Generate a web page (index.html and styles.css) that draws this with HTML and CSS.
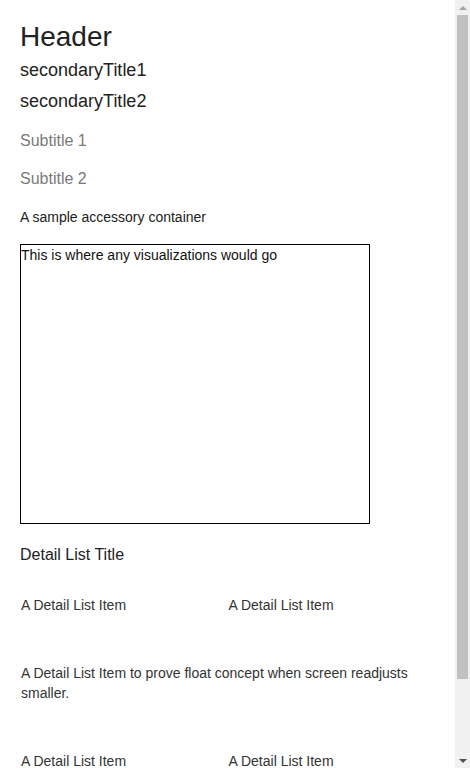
FILE: index.html
```html
<!DOCTYPE html>
<html lang="en">
<head>
<meta charset="utf-8">
<title>Detail View</title>
<link rel="stylesheet" href="styles.css">
</head>
<body>
<main class="page">
  <h1 class="header">Header</h1>
  <h2 class="secondary secondary-first">secondaryTitle1</h2>
  <h2 class="secondary secondary-next">secondaryTitle2</h2>
  <h3 class="subtitle subtitle-first">Subtitle 1</h3>
  <h3 class="subtitle subtitle-next">Subtitle 2</h3>
  <div class="accessory">A sample accessory container</div>
  <div class="viz">This is where any visualizations would go</div>
  <section class="detail-list">
    <h4 class="detail-title">Detail List Title</h4>
    <div class="items">
      <div class="item">A Detail List Item</div>
      <div class="item">A Detail List Item</div>
      <div class="item item-wide">A Detail List Item to prove float concept when screen readjusts smaller.</div>
      <div class="item">A Detail List Item</div>
      <div class="item">A Detail List Item</div>
    </div>
  </section>
</main>
<div class="scrollbar" aria-hidden="true">
  <div class="sb-button"><span class="sb-arrow-up"></span></div>
  <div class="sb-track"><div class="sb-thumb"></div></div>
  <div class="sb-button"><span class="sb-arrow-down"></span></div>
</div>
</body>
</html>
```

FILE: styles.css
```css
html, body {
  margin: 0;
  padding: 0;
  background: #ffffff;
}

body {
  font-family: "Liberation Sans", Arial, sans-serif;
  color: #222222;
}

.page {
  width: 455px;
  box-sizing: border-box;
  padding: 21px 20px 57px 20px;
}

.header {
  margin: 0;
  font-size: 28px;
  line-height: 32px;
  font-weight: normal;
  color: #222222;
}

.secondary {
  margin: 0;
  font-size: 18px;
  line-height: 22px;
  font-weight: normal;
  color: #222222;
}

.secondary-first {
  margin-top: 6px;
}

.secondary-next {
  margin-top: 9px;
}

.subtitle {
  margin: 0;
  font-size: 16px;
  line-height: 20px;
  font-weight: normal;
  color: #7a7a7a;
}

.subtitle-first {
  margin-top: 19px;
}

.subtitle-next {
  margin-top: 18px;
}

.accessory {
  margin-top: 20px;
  font-size: 14px;
  line-height: 16px;
  color: #222222;
}

.viz {
  margin-top: 19px;
  width: 350px;
  height: 280px;
  box-sizing: border-box;
  border: 1px solid #000000;
  font-size: 14px;
  line-height: 20px;
  color: #111111;
}

.detail-list {
  margin-top: 21px;
}

.detail-title {
  margin: 0;
  font-size: 16px;
  line-height: 20px;
  font-weight: normal;
  color: #222222;
}

.items {
  margin-top: 6px;
  display: flex;
  flex-wrap: wrap;
}

.item {
  width: 50%;
  box-sizing: border-box;
  padding: 24px 0 24px 1px;
  font-size: 14px;
  line-height: 20px;
  color: #333333;
}

.item-wide {
  width: 100%;
}

/* classic window scrollbar drawn over the right edge */
.scrollbar {
  position: fixed;
  top: 0;
  right: 0;
  width: 15px;
  height: 100vh;
  background: #f1f1f1;
  display: flex;
  flex-direction: column;
}

.sb-button {
  height: 15px;
  flex: none;
  display: flex;
  align-items: center;
  justify-content: center;
}

.sb-arrow-up {
  width: 0;
  height: 0;
  border-left: 4px solid transparent;
  border-right: 4px solid transparent;
  border-bottom: 4px solid #a3a3a3;
}

.sb-arrow-down {
  width: 0;
  height: 0;
  border-left: 4px solid transparent;
  border-right: 4px solid transparent;
  border-top: 4px solid #505050;
}

.sb-track {
  flex: 1;
  display: flex;
  flex-direction: column;
  padding: 0 2px;
}

.sb-thumb {
  height: 664px;
  background: #c1c1c1;
}
```
